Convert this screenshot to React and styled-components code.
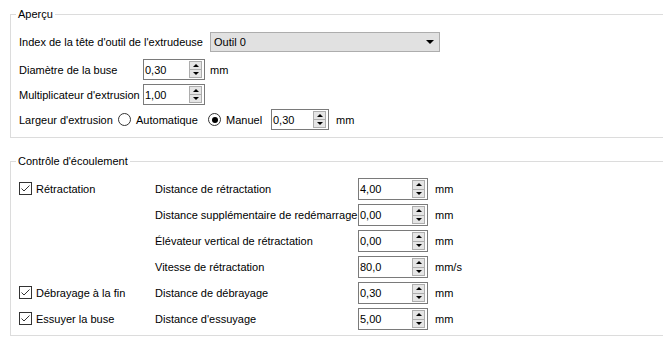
import React from 'react';
import styled, { createGlobalStyle } from 'styled-components';

const GlobalStyle = createGlobalStyle`
  html, body {
    margin: 0;
    background: #ffffff;
    overflow: hidden;
  }
  body {
    font-family: "Segoe UI", "Liberation Sans", sans-serif;
    font-size: 11px;
    color: #000000;
  }
`;

const Page = styled.div`
  padding-top: 6px;
`;

const GroupBox = styled.fieldset`
  margin: ${p => p.$top || 0}px 0 0 10px;
  padding: 0;
  border: 1px solid #dcdcdc;
  border-right: none;
  min-width: 0;

  legend {
    margin-left: 5px;
    padding: 0 2px;
    line-height: 16px;
  }
`;

const GroupBody = styled.div`
  padding: 9px 0 ${p => p.$bottom}px 8px;
`;

const Rows = styled.div`
  display: flex;
  flex-direction: column;
  gap: 4px;
`;

const Row = styled.div`
  display: flex;
  align-items: center;
  height: 21px;
  margin-bottom: ${p => p.$extra || 0}px;
`;

const Label = styled.span`
  white-space: nowrap;
  width: ${p => (p.$width ? `${p.$width}px` : 'auto')};
  margin-right: ${p => p.$gap || 0}px;
  flex: none;
`;

const Unit = styled.span`
  margin-left: ${p => p.$gap || 5}px;
  white-space: nowrap;
`;

const Combo = styled.div`
  box-sizing: border-box;
  width: 230px;
  height: 20px;
  background: #e1e1e1;
  border: 1px solid #adadad;
  display: flex;
  align-items: center;
  justify-content: space-between;
  padding: 0 5px 0 3px;
  flex: none;
`;

const DownArrow = styled.span`
  width: 0;
  height: 0;
  border-left: 4px solid transparent;
  border-right: 4px solid transparent;
  border-top: 4px solid #000;
`;

const SpinField = styled.div`
  box-sizing: border-box;
  width: ${p => p.$width}px;
  height: ${p => p.$height || 21}px;
  border: 1px solid #7a7a7a;
  background: #fff;
  display: flex;
  align-items: stretch;
  flex: none;
`;

const SpinValue = styled.span`
  flex: 1;
  display: flex;
  align-items: center;
  padding-left: 1px;
  color: #000;
`;

const SpinButtons = styled.div`
  box-sizing: border-box;
  width: 13px;
  margin: 1px 2px 1px 0;
  border: 1px solid #adadad;
  background: #e5e5e5;
  display: flex;
  flex-direction: column;
`;

const SpinHalf = styled.div`
  flex: 1;
  display: flex;
  align-items: center;
  justify-content: center;
  border-top: ${p => (p.$down ? '1px solid #adadad' : 'none')};
`;

const Tri = styled.span`
  width: 0;
  height: 0;
  border-left: 3px solid transparent;
  border-right: 3px solid transparent;
  ${p => (p.$down ? 'border-top: 3px solid #000;' : 'border-bottom: 3px solid #000;')}
`;

const Radio = styled.span`
  box-sizing: border-box;
  width: 13px;
  height: 13px;
  border-radius: 50%;
  border: 1px solid #333;
  background: #fff;
  display: inline-flex;
  align-items: center;
  justify-content: center;
  margin: 0 5px 0 ${p => p.$left}px;
  flex: none;

  &::after {
    content: '';
    width: 6px;
    height: 6px;
    border-radius: 50%;
    background: ${p => (p.$checked ? '#000' : 'transparent')};
  }
`;

const FlowGrid = styled.div`
  display: grid;
  grid-template-columns: 136px 203px 70px auto;
  grid-auto-rows: 22px;
  row-gap: 4px;
  align-items: center;
`;

const CheckWrap = styled.div`
  display: flex;
  align-items: center;
  grid-column: 1;
  margin-top: -1px;
`;

const CheckBox = styled.span`
  box-sizing: border-box;
  width: 13px;
  height: 13px;
  border: 1px solid #333;
  background: #fff;
  margin-right: 4px;
  display: inline-flex;
  flex: none;
`;

const Cell = styled.span`
  grid-column: ${p => p.$col};
  white-space: nowrap;
`;

const UnitCell = styled(Cell)`
  padding-left: 7px;
`;

const Spin = ({ value, width, height }) => (
  <SpinField $width={width} $height={height}>
    <SpinValue>{value}</SpinValue>
    <SpinButtons>
      <SpinHalf><Tri /></SpinHalf>
      <SpinHalf $down><Tri $down /></SpinHalf>
    </SpinButtons>
  </SpinField>
);

const Check = ({ label }) => (
  <CheckWrap>
    <CheckBox>
      <svg width="11" height="11" viewBox="0 0 11 11">
        <path d="M1.5 5.5 L4 8 L9.5 2.5" fill="none" stroke="#333" strokeWidth="1" />
      </svg>
    </CheckBox>
    {label}
  </CheckWrap>
);

const flowRows = [
  { check: 'Rétractation', label: 'Distance de rétractation', value: '4,00', unit: 'mm' },
  { label: 'Distance supplémentaire de redémarrage', value: '0,00', unit: 'mm' },
  { label: 'Élévateur vertical de rétractation', value: '0,00', unit: 'mm' },
  { label: 'Vitesse de rétractation', value: '80,0', unit: 'mm/s' },
  { check: 'Débrayage à la fin', label: 'Distance de débrayage', value: '0,30', unit: 'mm' },
  { check: 'Essuyer la buse', label: "Distance d'essuyage", value: '5,00', unit: 'mm' }
];

const App = () => (
  <>
    <GlobalStyle />
    <Page>
      <GroupBox>
        <legend>Aperçu</legend>
        <GroupBody $bottom={7}>
          <Rows>
            <Row $extra={3}>
              <Label $width={191}>Index de la tête d'outil de l'extrudeuse</Label>
              <Combo>
                <span>Outil 0</span>
                <DownArrow />
              </Combo>
            </Row>
            <Row>
              <Label $width={124}>Diamètre de la buse</Label>
              <Spin value="0,30" width={62} />
              <Unit>mm</Unit>
            </Row>
            <Row>
              <Label $width={124}>Multiplicateur d'extrusion</Label>
              <Spin value="1,00" width={62} />
            </Row>
            <Row>
              <Label $width={99}>Largeur d'extrusion</Label>
              <Radio $left={0} />
              <Label $width={72}>Automatique</Label>
              <Radio $left={0} $checked />
              <Label $width={45}>Manuel</Label>
              <Spin value="0,30" width={58} />
              <Unit $gap={7}>mm</Unit>
            </Row>
          </Rows>
        </GroupBody>
      </GroupBox>

      <GroupBox $top={15}>
        <legend>Contrôle d'écoulement</legend>
        <GroupBody $bottom={5}>
          <FlowGrid>
            {flowRows.map(r => (
              <React.Fragment key={r.label}>
                {r.check ? <Check label={r.check} /> : <Cell $col={1} />}
                <Cell $col={2}>{r.label}</Cell>
                <Cell $col={3}><Spin value={r.value} width={70} height={22} /></Cell>
                <UnitCell $col={4}>{r.unit}</UnitCell>
              </React.Fragment>
            ))}
          </FlowGrid>
        </GroupBody>
      </GroupBox>
    </Page>
  </>
);

export default App;
